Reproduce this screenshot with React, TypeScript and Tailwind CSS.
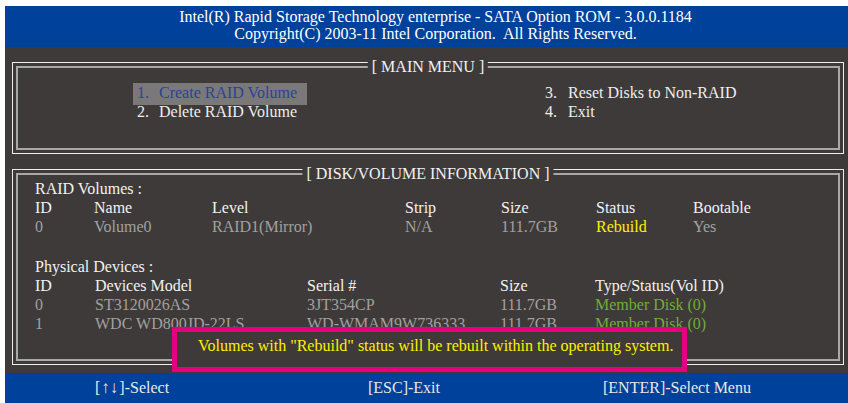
import type { ReactNode } from "react";

const SCREEN = "bg-[#3e3a39]";

function Frame({ title, height, children }: { title: string; height: string; children: ReactNode }) {
  return (
    <div className={`relative ml-[7px] w-[832px] shrink-0 border border-[#ededed] p-[3px] ${height}`}>
      <div className="h-full border-2 border-[#a9a8a8]">{children}</div>
      <div className={`absolute left-1/2 -translate-x-1/2 top-[-6px] px-[4px] leading-[19px] text-[#f2f2f2] whitespace-pre ${SCREEN}`}>
        {title}
      </div>
    </div>
  );
}

const volWidths = ["w-[59px]", "w-[118px]", "w-[193px]", "w-[96px]", "w-[95px]", "w-[97px]", ""];
const devWidths = ["w-[60px]", "w-[212px]", "w-[193px]", "w-[95px]", ""];

function Row({ cells, widths, colors }: { cells: string[]; widths: string[]; colors?: string[] }) {
  return (
    <div className="flex h-[19px] leading-[19px] whitespace-nowrap">
      {cells.map((c, i) => (
        <div key={i} className={`${widths[i]} shrink-0 ${colors ? colors[i] : "text-[#f2f2f2]"}`}>
          {c}
        </div>
      ))}
    </div>
  );
}

const gray = "text-[#a3a09f]";
const green = "text-[#70ae36]";
const yellow = "text-[#fff100]";

export default function App() {
  return (
    <div className="w-[848px] h-[403px] bg-white pl-[5px] pt-[6px] font-['Liberation_Serif',serif] text-[16px]">
      <div className={`relative w-[843px] h-[397px] flex flex-col ${SCREEN}`}>
        {/* Title bar */}
        <div className="h-[41px] shrink-0 bg-[#00419b] text-white text-center pl-[18px] pt-[1.5px] leading-[17px] whitespace-pre">
          <div>Intel(R) Rapid Storage Technology enterprise - SATA Option ROM - 3.0.0.1184</div>
          <div>Copyright(C) 2003-11 Intel Corporation.  All Rights Reserved.</div>
        </div>

        <div className="mt-[15px]" />
        <Frame title="[ MAIN MENU ]" height="h-[92px]">
          <div className="flex pt-[15px] pl-[115px] leading-[19px] text-[#eeeeee] whitespace-nowrap">
            <div className="w-[408px]">
              <div className="flex w-[174px] pl-[4px] pb-[3px] bg-[#7a7878] text-[#2a4398]">
                <span className="w-[22px]">1.</span>
                <span>Create RAID Volume</span>
              </div>
              <div className="flex -mt-[3px] pl-[4px]">
                <span className="w-[22px]">2.</span>
                <span>Delete RAID Volume</span>
              </div>
            </div>
            <div>
              <div className="flex pl-[4px]">
                <span className="w-[23px]">3.</span>
                <span>Reset Disks to Non-RAID</span>
              </div>
              <div className="flex pl-[4px]">
                <span className="w-[23px]">4.</span>
                <span>Exit</span>
              </div>
            </div>
          </div>
        </Frame>

        <div className="mt-[15px]" />
        <Frame title="[ DISK/VOLUME INFORMATION ]" height="h-[196px]">
          <div className="pt-[4px] pl-[17px]">
            <div className="h-[19px] leading-[19px] text-[#f2f2f2]">RAID Volumes :</div>
            <Row cells={["ID", "Name", "Level", "Strip", "Size", "Status", "Bootable"]} widths={volWidths} />
            <Row
              cells={["0", "Volume0", "RAID1(Mirror)", "N/A", "111.7GB", "Rebuild", "Yes"]}
              widths={volWidths}
              colors={[gray, gray, gray, gray, gray, yellow, gray]}
            />
            <div className="h-[21px]" />
            <div className="h-[19px] leading-[19px] text-[#f2f2f2]">Physical Devices :</div>
            <Row cells={["ID", "Devices Model", "Serial #", "Size", "Type/Status(Vol ID)"]} widths={devWidths} />
            <Row
              cells={["0", "ST3120026AS", "3JT354CP", "111.7GB", "Member Disk (0)"]}
              widths={devWidths}
              colors={[gray, gray, gray, gray, green]}
            />
            <Row
              cells={["1", "WDC WD800JD-22LS", "WD-WMAM9W736333", "111.7GB", "Member Disk (0)"]}
              widths={devWidths}
              colors={[gray, gray, gray, gray, green]}
            />
          </div>
        </Frame>

        {/* Key help bar */}
        <div className="mt-[8px] h-[30px] shrink-0 flex bg-[#00419b] pl-[90px] leading-[30px] text-[#e8e8e8] whitespace-nowrap">
          <div className="w-[273px]">
            [<span className="inline-block px-[1px] text-[17px]">↑↓</span>]-Select
          </div>
          <div className="w-[235px]">[ESC]-Exit</div>
          <div>[ENTER]-Select Menu</div>
        </div>

        {/* Callout over the device list */}
        <div className={`absolute left-[167px] top-[321px] w-[515px] h-[45px] border-[5px] border-[#e4007f] pl-[21px] pt-[4px] leading-[19px] text-[#fff100] whitespace-nowrap ${SCREEN}`}>
          Volumes with "Rebuild" status will be rebuilt within the operating system.
        </div>
      </div>
    </div>
  );
}
